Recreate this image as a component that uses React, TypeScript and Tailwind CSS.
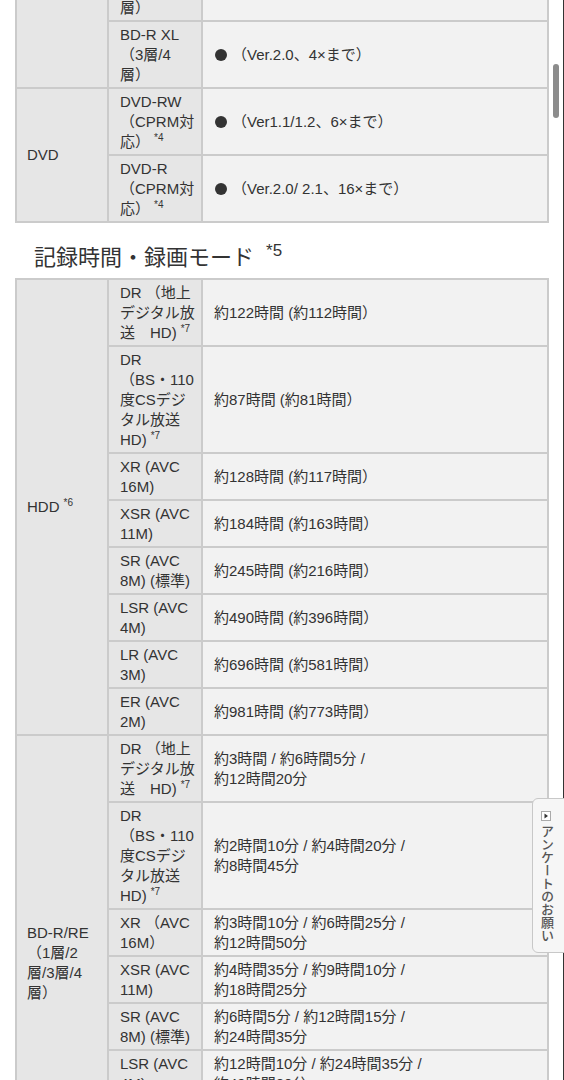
import React from "react";

type Row = { mode: string[]; value: string[]; bullet?: boolean };
type Group = { label: string[]; rows: Row[] };

const discTable: Group[] = [
  {
    label: [],
    rows: [
      { mode: ["BD-R", "（1層/2", "層）"], value: ["（Ver.1.1/1.2/1.3、6×まで）"], bullet: true },
      { mode: ["BD-R XL", "（3層/4", "層）"], value: ["（Ver.2.0、4×まで）"], bullet: true },
    ],
  },
  {
    label: ["DVD"],
    rows: [
      { mode: ["DVD-RW", "（CPRM対", "応） *4"], value: ["（Ver1.1/1.2、6×まで）"], bullet: true },
      { mode: ["DVD-R", "（CPRM対", "応） *4"], value: ["（Ver.2.0/ 2.1、16×まで）"], bullet: true },
    ],
  },
];

const timeTable: Group[] = [
  {
    label: ["HDD *6"],
    rows: [
      { mode: ["DR （地上", "デジタル放", "送　HD) *7"], value: ["約122時間 (約112時間）"] },
      { mode: ["DR", "（BS・110", "度CSデジ", "タル放送", "HD) *7"], value: ["約87時間 (約81時間）"] },
      { mode: ["XR (AVC", "16M)"], value: ["約128時間 (約117時間）"] },
      { mode: ["XSR (AVC", "11M)"], value: ["約184時間 (約163時間）"] },
      { mode: ["SR (AVC", "8M) (標準)"], value: ["約245時間 (約216時間）"] },
      { mode: ["LSR (AVC", "4M)"], value: ["約490時間 (約396時間）"] },
      { mode: ["LR (AVC", "3M)"], value: ["約696時間 (約581時間）"] },
      { mode: ["ER (AVC", "2M)"], value: ["約981時間 (約773時間）"] },
    ],
  },
  {
    label: ["BD-R/RE", "（1層/2", "層/3層/4", "層）"],
    rows: [
      { mode: ["DR （地上", "デジタル放", "送　HD) *7"], value: ["約3時間 / 約6時間5分 /", "約12時間20分"] },
      { mode: ["DR", "（BS・110", "度CSデジ", "タル放送", "HD) *7"], value: ["約2時間10分 / 約4時間20分 /", "約8時間45分"] },
      { mode: ["XR （AVC", "16M）"], value: ["約3時間10分 / 約6時間25分 /", "約12時間50分"] },
      { mode: ["XSR (AVC", "11M)"], value: ["約4時間35分 / 約9時間10分 /", "約18時間25分"] },
      { mode: ["SR (AVC", "8M) (標準)"], value: ["約6時間5分 / 約12時間15分 /", "約24時間35分"] },
      { mode: ["LSR (AVC", "4M)"], value: ["約12時間10分 / 約24時間35分 /", "約49時間20分"] },
      { mode: ["LR (AVC", "3M)"], value: ["約16時間15分 / 約32時間50分 /", "約66時間5分"] },
      { mode: ["ER (AVC", "2M)"], value: ["約24時間35分 / 約49時間10分 /", "約99時間"] },
    ],
  },
];

// "応） *4" -> text + raised note mark
function Line({ text }: { text: string }) {
  const m = text.match(/^(.*?)\s?\*(\d)$/);
  if (!m) return <div className="whitespace-nowrap">{text}</div>;
  return (
    <div className="h-[20px] whitespace-nowrap">
      {m[1]}
      <span className="relative -top-[6px] ml-[4px] align-baseline text-[10px] leading-[0]">*{m[2]}</span>
    </div>
  );
}

function SpecTable({ groups }: { groups: Group[] }) {
  return (
    <div className="mx-[15px] grid grid-cols-[90px_92px_1fr] gap-[2px] bg-[#cbcbcb] p-[2px] text-[#333]">
      {groups.map((g, gi) => (
        <React.Fragment key={gi}>
          <div
            className={`flex flex-col justify-center bg-[#e6e6e6] pl-[10px] text-[15px] leading-[20px] ${
              g.rows.length === 8 ? "row-span-8" : "row-span-2"
            }`}
          >
            {g.label.map((l, i) => (
              <Line key={i} text={l} />
            ))}
          </div>
          {g.rows.map((r, ri) => (
            <React.Fragment key={ri}>
              <div className="flex flex-col justify-center bg-[#e6e6e6] py-[2.5px] pl-[11px] pr-[2px] text-[15px] leading-[20px]">
                {r.mode.map((l, i) => (
                  <Line key={i} text={l} />
                ))}
              </div>
              <div className="flex flex-col justify-center bg-[#f2f2f2] pl-[11px] text-[15px] leading-[20px]">
                {r.value.map((v, i) => (
                  <div key={i} className="flex items-center whitespace-nowrap">
                    {r.bullet && <span className="ml-[1px] mr-[5px] inline-block h-3 w-3 rounded-full bg-[#333]" />}
                    {v}
                  </div>
                ))}
              </div>
            </React.Fragment>
          ))}
        </React.Fragment>
      ))}
    </div>
  );
}

export default function App() {
  return (
    <div className="relative h-[1080px] w-[564px] overflow-hidden bg-white font-['Liberation_Sans','Noto_Sans_CJK_JP',sans-serif]">
      <div className="-mt-[47px]">
        <SpecTable groups={discTable} />
        <h2 className="mb-[4px] ml-[34px] mt-[18px] text-[22px] font-normal leading-[33px] text-[#333]">
          記録時間・録画モード
          <span className="relative -top-[9px] ml-[12px] text-[17px] leading-[0]">*5</span>
        </h2>
        <SpecTable groups={timeTable} />
      </div>

      {/* page edge + scrollbar */}
      <div className="absolute right-0 top-0 h-full w-px bg-[#333]" />
      <div className="absolute left-[553px] top-[64px] h-[54px] w-[6px] rounded-full bg-[#8c8c8c]" />

      {/* survey tab */}
      <div className="absolute left-[532px] top-[798px] flex h-[155px] w-[40px] rounded-l-[6px] border border-[#c8c8c8] bg-[#f6f6f6] pl-[5px] pt-[12px]">
        <div className="flex w-[16px] flex-col items-center gap-[4px]">
          <svg width="10" height="10" viewBox="0 0 10 10">
            <rect x="0.5" y="0.5" width="9" height="9" fill="#fff" stroke="#aaa" />
            <path d="M3.5 2.5 L7 5 L3.5 7.5 Z" fill="#333" />
          </svg>
          <span className="text-[13px] font-medium leading-[16px] text-[#555] [writing-mode:vertical-rl]">
            アンケートのお願い
          </span>
        </div>
      </div>
    </div>
  );
}
